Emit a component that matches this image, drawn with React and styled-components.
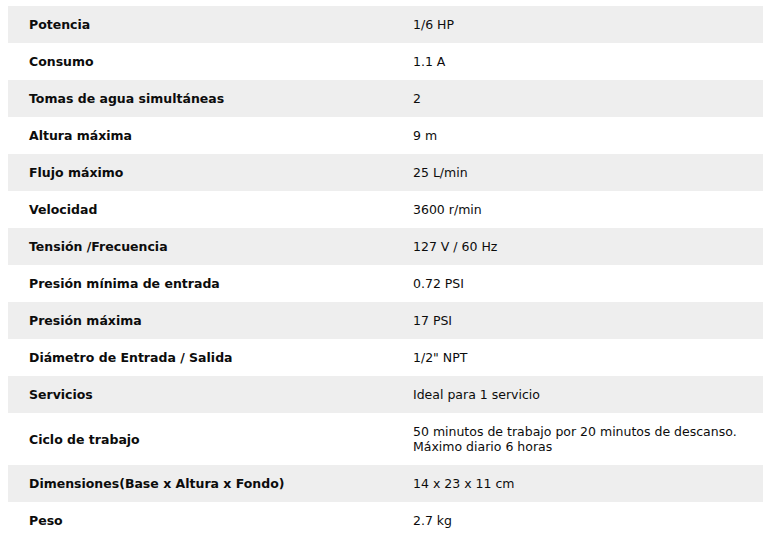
import React from 'react'
import styled, { createGlobalStyle } from 'styled-components'

const GlobalStyle = createGlobalStyle`
  body {
    margin: 6px 0 0 8px;
    background: #fff;
    font-family: 'DejaVu Sans', Verdana, sans-serif;
    color: #0c0c0c;
  }
`

const Table = styled.div`
  width: 755px;
  display: flex;
  flex-direction: column;
`

const Row = styled.div`
  display: grid;
  grid-template-columns: 384px 1fr;
  background: ${props => (props.$shade ? '#eeeeee' : '#ffffff')};
`

const Cell = styled.div`
  padding: 11px 16px 11px 21px;
  font-size: 12.5px;
  line-height: 15px;
  font-weight: ${props => (props.$head ? 700 : 400)};
  display: flex;
  align-items: center;
`

const specs = [
  ['Potencia', '1/6 HP'],
  ['Consumo', '1.1 A'],
  ['Tomas de agua simultáneas', '2'],
  ['Altura máxima', '9 m'],
  ['Flujo máximo', '25 L/min'],
  ['Velocidad', '3600 r/min'],
  ['Tensión /Frecuencia', '127 V / 60 Hz'],
  ['Presión mínima de entrada', '0.72 PSI'],
  ['Presión máxima', '17 PSI'],
  ['Diámetro de Entrada / Salida', '1/2" NPT'],
  ['Servicios', 'Ideal para 1 servicio'],
  [
    'Ciclo de trabajo',
    <>
      50 minutos de trabajo por 20 minutos de descanso.
      <br />
      Máximo diario 6 horas
    </>,
  ],
  ['Dimensiones(Base x Altura x Fondo)', '14 x 23 x 11 cm'],
  ['Peso', '2.7 kg'],
]

export default function App() {
  return (
    <>
      <GlobalStyle />
      <Table>
        {specs.map(([label, value], i) => (
          <Row key={label} $shade={i % 2 === 0}>
            <Cell $head>{label}</Cell>
            <Cell>{value}</Cell>
          </Row>
        ))}
      </Table>
    </>
  )
}
